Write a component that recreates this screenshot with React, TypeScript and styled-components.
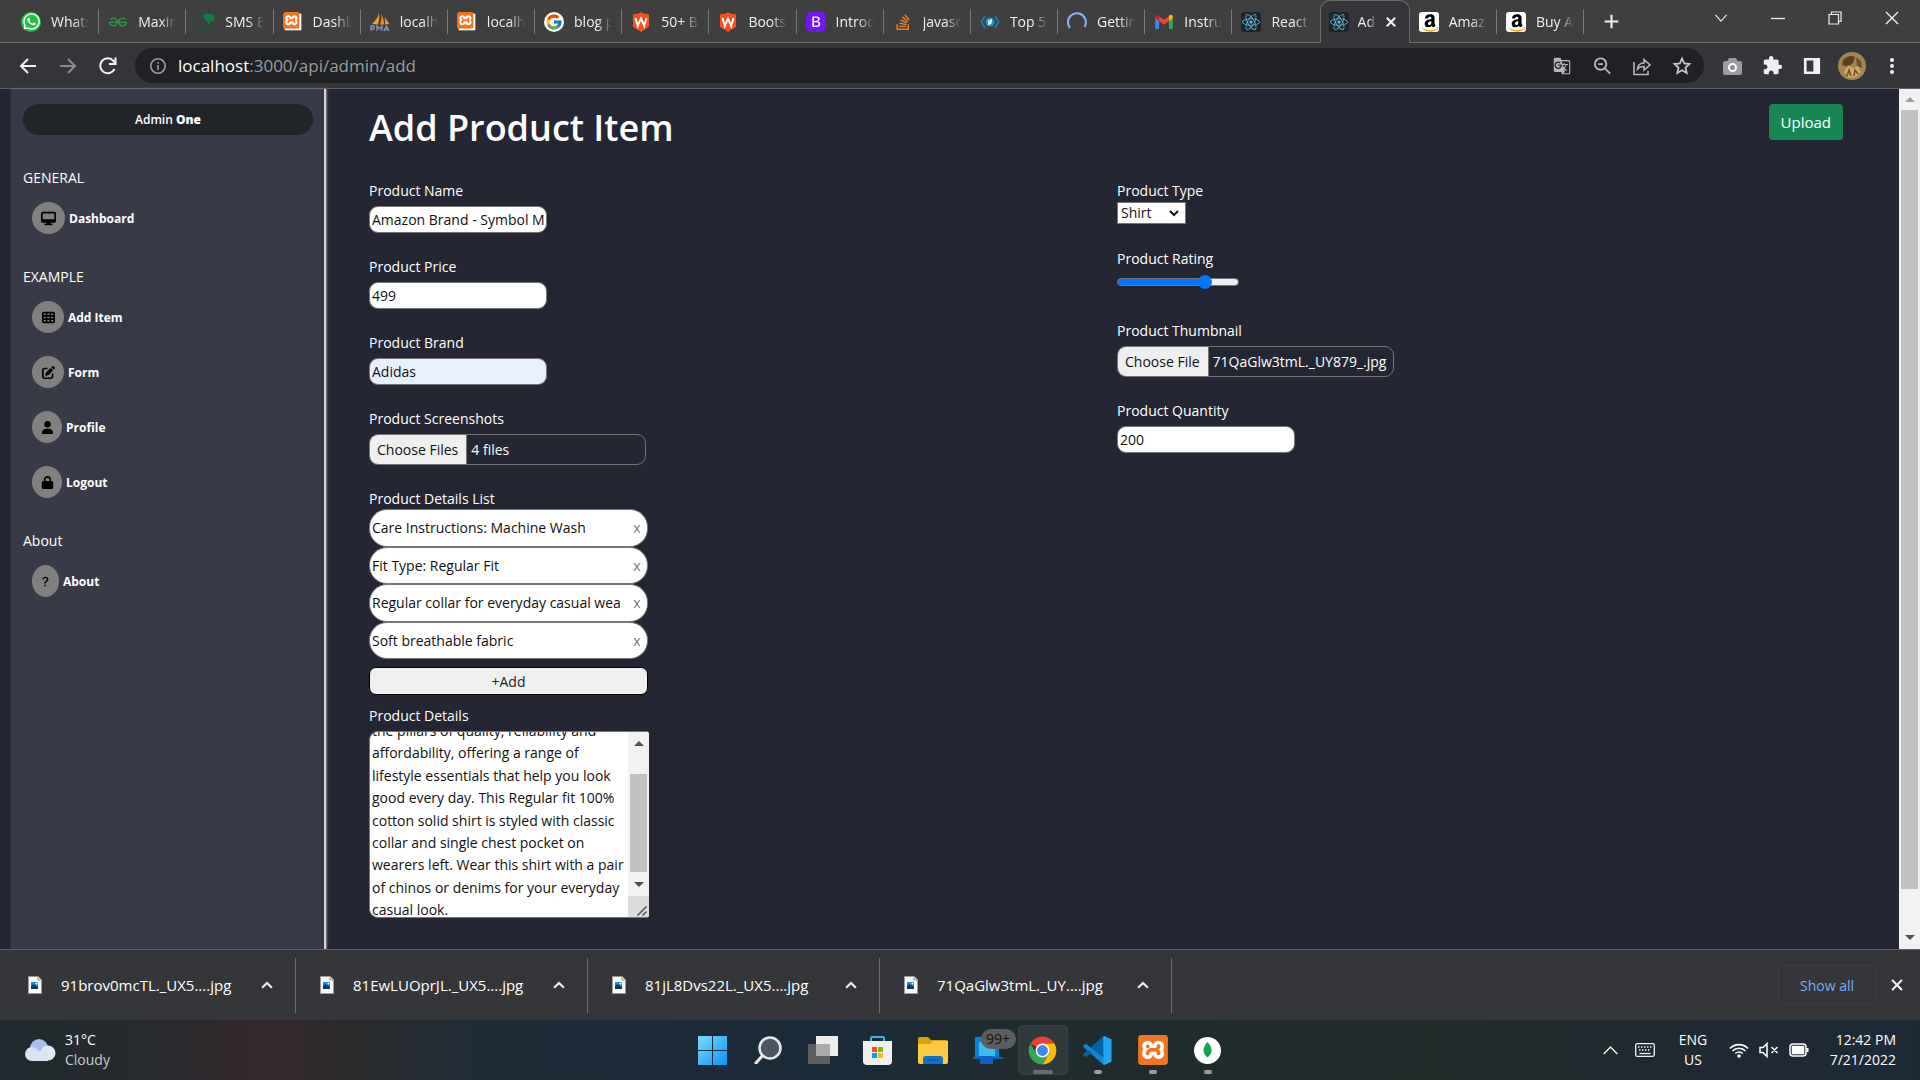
import React, { useEffect, useId, useRef } from "react";
import styled, { createGlobalStyle, css } from "styled-components";
import { FaAmazon, FaReact, FaWhatsapp, FaStackOverflow } from "react-icons/fa";
import { FaDesktop, FaTableCells, FaPenToSquare, FaUser, FaLock } from "react-icons/fa6";
import { BsQuestionLg, BsBootstrapFill } from "react-icons/bs";
import { SiXampp, SiGeeksforgeeks } from "react-icons/si";
import { FcGoogle } from "react-icons/fc";
import { MdExtension, MdGTranslate } from "react-icons/md";

const GlobalStyle = createGlobalStyle`
  *, *::before, *::after { box-sizing: border-box; }
  body {
    margin: 0;
    background: #252634;
    color: #fff;
    font-family: "Open Sans", "Noto Sans", sans-serif;
    font-size: 14px;
    line-height: 21px;
  }
  button, input, select, textarea { font: inherit; }
  button { border: 0; padding: 0; background: none; color: inherit; }
  svg { display: block; flex: none; }
`;

const Screen = styled.div`
  display: flex;
  flex-direction: column;
  height: 100vh;
  overflow: hidden;
`;

/* ---------- tab strip ---------- */

const TabStrip = styled.header`
  display: flex;
  flex: none;
  height: 43px;
  padding-left: 12px;
  background: #3f3f3f;
  box-shadow: inset 0 -1px #6b6c6e;
`;

const Tabs = styled.nav`
  display: flex;
  flex: 0 1 1572px;
  min-width: 0;
`;

const Tab = styled.a<{ $active?: boolean; $plain?: boolean }>`
  display: flex;
  flex: 1 1 0;
  align-items: center;
  gap: 10px;
  min-width: 0;
  padding: 0 10px 0 9px;
  color: #f1f1f1;
  text-decoration: none;
  background: linear-gradient(#77787a, #77787a) no-repeat right center / ${(p) => (p.$plain ? "0 0" : "1px 25px")};
  ${(p) =>
    p.$active &&
    css`
      gap: 9px;
      background: #35363a;
      border: 1px solid #6b6c6e;
      border-bottom: 0;
      border-radius: 10px 10px 0 0;
      padding: 0 12px 1px 8px;
    `}
`;

const TabTitle = styled.span`
  flex: 1;
  min-width: 0;
  overflow: hidden;
  white-space: nowrap;
  mask-image: linear-gradient(to right, #000 60%, transparent);
`;

const Favicon = styled.span<{ $bg?: string; $color?: string; $size?: number; $round?: boolean }>`
  display: grid;
  flex: none;
  place-items: center;
  width: 20px;
  height: 20px;
  overflow: hidden;
  border-radius: ${(p) => (p.$round ? 10 : 3)}px;
  background: ${(p) => p.$bg ?? "transparent"};
  color: ${(p) => p.$color ?? "#fff"};
  svg { width: ${(p) => p.$size ?? 20}px; height: ${(p) => p.$size ?? 20}px; }
`;

const IconButton = styled.button<{ $w?: number; $color?: string }>`
  display: grid;
  flex: none;
  place-items: center;
  width: ${(p) => p.$w ?? 40}px;
  height: 36px;
  color: ${(p) => p.$color ?? "#f1f1f1"};
`;

const NewTab = styled(IconButton)`
  margin: 3px auto 0 7px;
`;

/* ---------- address bar ---------- */

const Toolbar = styled.div`
  display: flex;
  flex: none;
  align-items: center;
  height: 46px;
  padding: 0 8px;
  background: #35363a;
  border-bottom: 1px solid #5f6063;
`;

const Omnibox = styled.div`
  display: flex;
  flex: 1;
  align-items: center;
  height: 35px;
  margin: 0 8px 0 7px;
  padding: 0 2px 0 14px;
  border-radius: 18px;
  background: #202124;
  color: #9a9da1;
`;

const Url = styled.div`
  flex: 1;
  margin-left: 11px;
  font-size: 17px;
  line-height: 24px;
  b { font-weight: 400; color: #fff; }
`;

/* ---------- page ---------- */

const Page = styled.div`
  display: flex;
  flex: 1;
  min-height: 0;
  padding-left: 11px;
  background: #252634;
`;

const Sidebar = styled.aside`
  flex: none;
  width: 315px;
  padding: 15px 11px 0 12px;
  border-right: 2px solid #d6d6da;
  background: #393a47;
  box-shadow: 1px 0 2px #8a8a93;
`;

const AdminBadge = styled.div`
  height: 31px;
  border-radius: 16px;
  background: #212529;
  font-size: 12px;
  font-weight: 600;
  line-height: 31px;
  text-align: center;
  b { font-weight: 800; }
`;

const NavTitle = styled.h2`
  margin: 32px 0 14px;
  font-size: 14px;
  font-weight: 400;
  line-height: 21px;
`;

const NavList = styled.ul`
  display: grid;
  gap: 23px;
  margin: 0;
  padding: 0 0 0 9px;
  list-style: none;
`;

const NavLink = styled.a<{ $disc: number }>`
  display: flex;
  align-items: center;
  gap: 4px;
  color: #fff;
  font-size: 12px;
  font-weight: 700;
  text-decoration: none;
  span {
    display: grid;
    place-items: center;
    width: ${(p) => p.$disc}px;
    height: 32px;
    border-radius: 50%;
    background: #808080;
    color: #000;
  }
`;

const Main = styled.main`
  flex: 1;
  min-width: 0;
  padding: 15px 56px 0 43px;
`;

const Heading = styled.div`
  display: flex;
  align-items: flex-start;
  justify-content: space-between;
  margin-bottom: 28px;
  h1 { margin: 0; font-size: 36px; font-weight: 600; line-height: 48px; }
`;

const Upload = styled.button`
  height: 36px;
  padding: 0 12px;
  border-radius: 4px;
  background: #198754;
  font-size: 15px;
`;

const Form = styled.form`
  display: grid;
  grid-template-columns: 1fr 1fr;
  gap: 22px;
`;

const Column = styled.div`
  display: flex;
  flex-direction: column;
  align-items: flex-start;
`;

const Field = styled.div<{ $gap?: number; $after?: number }>`
  display: flex;
  flex-direction: column;
  align-items: flex-start;
  gap: ${(p) => p.$gap ?? 5}px;
  margin-bottom: ${(p) => p.$after ?? 23}px;
`;

const TextInput = styled.input<{ $filled?: boolean }>`
  width: 178px;
  height: 27px;
  padding: 0 2px;
  border: 1px solid #767676;
  border-radius: 9px;
  background: ${(p) => (p.$filled ? "#e8f0fe" : "#fff")};
  color: #111;
`;

const FileBox = styled.input`
  width: 277px;
  height: 31px;
  border: 1px solid #767676;
  border-radius: 9px;
  color: #fff;
  line-height: 29px;
  &::file-selector-button {
    height: 29px;
    margin: 0 4px 0 0;
    padding: 0 8px 0 7px;
    border: 0;
    border-right: 1px solid #767676;
    background: #efefef;
    color: #111;
    font: inherit;
  }
`;

const SelectBox = styled.div`
  position: relative;
  svg { position: absolute; right: 7px; top: 8px; pointer-events: none; }
`;

const Select = styled.select`
  display: block;
  width: 69px;
  height: 22px;
  padding: 0 3px;
  border: 1px solid #767676;
  border-radius: 0;
  background: #fff;
  color: #111;
  line-height: 20px;
  appearance: none;
`;

const Range = styled.input`
  width: 122px;
  height: 16px;
  margin: 0;
  appearance: none;
  background: transparent;
  &::-webkit-slider-runnable-track {
    height: 8px;
    border: 1px solid #6f7480;
    border-radius: 4px;
    background: linear-gradient(to right, #0075ff 72%, #efefef 72%);
  }
  &::-webkit-slider-thumb {
    width: 14px;
    height: 14px;
    margin-top: -4px;
    border-radius: 50%;
    background: #0075ff;
    appearance: none;
  }
`;

const DetailList = styled.ul`
  display: grid;
  grid-template-rows: repeat(4, 1fr);
  width: 279px;
  height: 150px;
  margin: 0;
  padding: 0;
  list-style: none;
`;

const DetailRow = styled.li`
  display: flex;
  overflow: hidden;
  border: 1px solid #767676;
  border-radius: 18px;
  background: #fff;
  input {
    flex: 1;
    min-width: 0;
    padding: 0 0 0 2px;
    border: 0;
    background: none;
    color: #111;
  }
  button { width: 17px; margin-right: 1px; padding-right: 1px; color: #777; }
`;

const AddButton = styled.button`
  width: 279px;
  height: 28px;
  margin-top: 8px;
  border: 1px solid #000;
  border-radius: 7px;
  background: #efefef;
  color: #222;
`;

const AreaBox = styled.div`
  display: flex;
  width: 280px;
  height: 187px;
  overflow: hidden;
  border: 1px solid #767676;
  border-right: 0;
  border-radius: 9px 3px 3px 9px;
  background: #fff;
`;

const Area = styled.textarea`
  flex: 1;
  min-width: 0;
  padding: 2px 0 12px 2px;
  border: 0;
  outline: 0;
  overflow: hidden;
  resize: none;
  background: none;
  color: #111;
  line-height: 1.6;
  white-space: pre;
`;

const ScrollTrack = styled.div<{ $w: number }>`
  display: flex;
  flex: none;
  flex-direction: column;
  align-items: center;
  width: ${(p) => p.$w}px;
  background: #f1f1f1;
  color: #505050;
`;

const ScrollArrow = styled.span<{ $up?: boolean; $muted?: boolean; $h?: number }>`
  display: grid;
  flex: none;
  place-items: center;
  height: ${(p) => p.$h ?? 21}px;
  opacity: ${(p) => (p.$muted ? 0.5 : 1)};
  &::before {
    content: "";
    border: 5px solid transparent;
    border-${(p) => (p.$up ? "bottom" : "top")}-color: currentColor;
    border-${(p) => (p.$up ? "top" : "bottom")}-width: 0;
  }
`;

const ScrollRail = styled.div<{ $before: number; $thumb: number; $after: number }>`
  display: grid;
  flex: 1;
  align-self: stretch;
  margin: 0 2px;
  grid-template-rows: ${(p) => `${p.$before}fr ${p.$thumb}fr ${p.$after}fr`};
  &::before { content: ""; grid-row: 2; background: #c1c1c1; }
`;

const Grip = styled.span`
  display: grid;
  flex: none;
  place-items: end;
  width: 100%;
  height: 21px;
  padding: 0 2px 1px 0;
  background: #dcdcdc;
`;

/* ---------- downloads ---------- */

const DownloadBar = styled.section`
  display: flex;
  flex: none;
  align-items: center;
  height: 71px;
  padding: 0 8px 0 4px;
  border-top: 1px solid #5f6063;
  background: #35363a;
`;

const Download = styled.div`
  display: flex;
  flex: 0 1 292px;
  align-items: center;
  height: 55px;
  padding: 0 18px 0 24px;
  border-right: 1px solid #6b6c6e;
  font-size: 15px;
  white-space: nowrap;
  a { flex: 1; margin-left: 19px; color: #fff; text-decoration: none; }
`;

const ShowAll = styled.button`
  width: 98px;
  height: 40px;
  margin: 0 6px 0 auto;
  border: 1px solid #3f4044;
  border-radius: 5px;
  color: #7baaf7;
  font-weight: 500;
`;

/* ---------- taskbar ---------- */

const Taskbar = styled.footer`
  display: grid;
  flex: none;
  grid-template-columns: 1fr auto 1fr;
  align-items: center;
  height: 60px;
  padding: 0 24px;
  background: linear-gradient(
    to right,
    #202a2e 0%, #282a30 8%, #35282a 14%, #2b2b2c 18%, #1f2c38 25%,
    #1c2b39 44%, #202b2e 53%, #222c2b 75%, #202a2f 84%, #202936 92%, #1d2a36 100%
  );
`;

const Weather = styled.button`
  display: flex;
  align-items: center;
  gap: 9px;
  justify-self: start;
  line-height: 20px;
  text-align: left;
  span { display: grid; }
  small { font-size: 14px; color: #c8cacc; }
`;

const Apps = styled.div`
  display: flex;
  gap: 5px;
`;

const TaskButton = styled.button<{ $active?: boolean; $running?: boolean }>`
  position: relative;
  display: grid;
  place-items: center;
  width: 50px;
  height: 50px;
  border-radius: 5px;
  ${(p) => p.$active && css`background: #31393c; box-shadow: inset 0 0 0 1px #3a4245;`}
  &::after {
    content: "";
    position: absolute;
    bottom: 1px;
    width: ${(p) => (p.$active ? 20 : p.$running ? 8 : 0)}px;
    height: 4px;
    border-radius: 2px;
    background: ${(p) => (p.$active ? "#6a6c6d" : "#9c9fa0")};
  }
`;

const Count = styled.span`
  position: absolute;
  top: 4px;
  right: -3px;
  width: 35px;
  height: 20px;
  border-radius: 10px;
  background: #5d5d5d;
  color: #111;
  line-height: 20px;
`;

const Tray = styled.div`
  display: flex;
  align-items: center;
  justify-content: flex-end;
  line-height: 20px;
  text-align: center;
`;

const TrayGroup = styled.div`
  display: flex;
  align-items: center;
  gap: 10px;
  margin: 0 19px 0 16px;
`;

const Language = styled.div`
  width: 40px;
  margin-left: 3px;
`;

const Clock = styled.time`
  width: 67px;
  text-align: right;
  white-space: nowrap;
`;

/* ---------- drawings ---------- */

type StrokeProps = { d: string; size?: number; w?: number };
const Stroke = ({ d, size = 20, w = 2 }: StrokeProps) => (
  <svg width={size} height={size} viewBox="0 0 20 20" fill="none" stroke="currentColor" strokeWidth={w}>
    <path d={d} />
  </svg>
);

const XamppMark = ({ size = 20 }: { size?: number }) => (
  <svg width={size} height={size} viewBox="0 0 24 24">
    <rect x="2" y="2" width="20" height="20" fill="#fff" />
    <SiXampp size={24} color="#f37522" />
  </svg>
);

const Shield = () => (
  <svg viewBox="0 0 20 20">
    <path d="M10 0l2 1.6 6 .6v12.6L10 20l-8-5.200V2.200l6-.6z" fill="#f4511e" />
    <path d="M4.500 6l2.300 8L10 6.500l3.200 7.500 2.300-8" fill="none" stroke="#fff" strokeWidth="1.900" />
  </svg>
);

const AmazonMark = () => {
  const id = useId();
  return (
    <svg viewBox="0 0 20 20">
      <linearGradient id={id} x2="0" y2="1">
        <stop offset=".74" stopColor="#000" />
        <stop offset=".74" stopColor="#ff9900" />
      </linearGradient>
      <FaAmazon x="1" y="1" size={18} fill={`url(#${id})`} />
    </svg>
  );
};

const GmailMark = () => (
  <svg viewBox="0 0 24 24">
    <path d="M1.500 6.500v12.800c0 .9.700 1.200 1.200 1.200h3.400V10z" fill="#4285f4" />
    <path d="M22.500 6.500v12.800c0 .9-.7 1.200-1.200 1.200h-3.400V10z" fill="#34a853" />
    <path d="M17.900 5v5.800l4.600-3.500V5.500c0-2-2.200-3-3.700-1.800z" fill="#fbbc04" />
    <path d="M6.100 10.800V5l5.900 4.400L17.900 5v5.800L12 15.200z" fill="#ea4335" />
    <path d="M1.500 5.500v1.800l4.600 3.500V5l-.9-1.300C3.700 2.500 1.500 3.500 1.500 5.500z" fill="#c5221f" />
  </svg>
);

const SailMark = () => (
  <svg viewBox="0 0 20 20">
    <path d="M9 1C8 6 5 9 2 12l6 .5C9 9 9.500 5 9 1z" fill="#f7a11a" />
    <path d="M11 2c1 3 .5 7-1 10.500h4C14 9 13 5 11 2z" fill="#f58b1e" />
    <path d="M14 5c1.500 2 1.500 5 .9 7.500l4.100-.5C18 9 16 7 14 5z" fill="#f7a11a" />
    <path d="M1 19v-5h3v3H1M7 19v-5l2.500 3 2.500-3v5M14 19l2.500-5 2.500 5M15 17.500h3" fill="none" stroke="#8a8fb5" strokeWidth="1.400" />
  </svg>
);

const SmsMark = () => (
  <svg viewBox="0 0 20 20">
    <path d="M9 2h6a4 4 0 0 1 1 8l-3 3v-3l-4-3z" fill="#127a44" />
    <path d="M2 4l3 4M3 8l4-3M5 12l3-4" stroke="#24455c" fill="none" />
    <path d="M1 17h18" stroke="#175f3c" strokeWidth="1.500" strokeDasharray="3 1" />
  </svg>
);

const CodeMark = () => (
  <svg viewBox="0 0 20 20" fill="none" stroke="#1b7ba8" strokeWidth="2">
    <path d="M5 4L1.500 10 5 16M15 4l3.500 6L15 16" />
    <circle cx="10" cy="10" r="4.500" fill="#1c96d1" stroke="none" />
    <path d="M9 8v5M11.500 7l-1 5" stroke="#fff" strokeWidth="1.500" />
  </svg>
);

const FileImage = () => (
  <svg width="14" height="18" viewBox="0 0 14 18">
    <path d="M.5.5h9.500l3.500 3.500v13.500H.5z" fill="#fafafa" stroke="#9a9a9a" />
    <path d="M10 .5V4h3.500" fill="#ddd" stroke="#9a9a9a" />
    <path d="M3 6h7v7H3z" fill="#1f8ad6" />
    <path d="M3 10l2.500-2 4.500 3v2H3z" fill="#12356f" />
    <circle cx="8.500" cy="7.500" r="1" fill="#fff" />
  </svg>
);

const ChromeMark = () => (
  <svg width="29" height="29" viewBox="0 0 48 48">
    <path d="M24 24L4.100 12.500A23 23 0 0 1 43.900 12.500H24z" fill="#ea4335" />
    <path d="M43.900 12.500A23 23 0 0 1 24 47l10-17.300L24 12.500z" fill="#fbbc04" />
    <path d="M24 47A23 23 0 0 1 4.100 12.500l10 17.300L34 29.800z" fill="#34a853" />
    <circle cx="24" cy="24" r="11.500" fill="#fff" />
    <circle cx="24" cy="24" r="9" fill="#4285f4" />
  </svg>
);

const CodeEditorMark = () => (
  <svg width="31" height="31" viewBox="0 0 32 32">
    <path d="M23 1L9.500 13.500 4 9.300 1.500 10.500v2.200L21 30l2 1z" fill="#0a7fcf" />
    <path d="M23 31L9.500 18.500 4 22.700 1.500 21.500v-2.200L21 2l2-1z" fill="#0065a9" />
    <path d="M1.500 10.500L4 9.300 23 24v7z" fill="#1686d0" />
    <path d="M23 1l7.500 3.500v23L23 31l-1-1V2z" fill="#22a5f1" />
  </svg>
);

const tabs: { title: string; icon: React.ReactNode; active?: boolean; plain?: boolean }[] = [
  { title: "Whats", icon: <Favicon $bg="#25c04b" $color="#fff" $size={19} $round><FaWhatsapp /></Favicon> },
  { title: "Maxim", icon: <Favicon $color="#2f8d46" $size={18}><SiGeeksforgeeks /></Favicon> },
  { title: "SMS B", icon: <Favicon><SmsMark /></Favicon> },
  { title: "Dashb", icon: <Favicon><XamppMark /></Favicon> },
  { title: "localh", icon: <Favicon><SailMark /></Favicon> },
  { title: "localh", icon: <Favicon><XamppMark /></Favicon> },
  { title: "blog p", icon: <Favicon $bg="#fff" $size={18} $round><FcGoogle /></Favicon> },
  { title: "50+ B", icon: <Favicon><Shield /></Favicon> },
  { title: "Boots", icon: <Favicon><Shield /></Favicon> },
  { title: "Introd", icon: <Favicon $bg="linear-gradient(#fff, #fff) center / 14px 14px no-repeat" $color="#7413f5"><BsBootstrapFill /></Favicon> },
  { title: "javasc", icon: <Favicon $color="#f2802a" $size={18}><FaStackOverflow /></Favicon> },
  { title: "Top 5", icon: <Favicon><CodeMark /></Favicon> },
  { title: "Gettin", icon: <Favicon $color="#8ab4f8"><Stroke d="M3 16A9 9 0 1 1 17.500 15" w={2} /></Favicon> },
  { title: "Instru", icon: <Favicon><GmailMark /></Favicon> },
  { title: "React", icon: <Favicon $bg="#20232a" $color="#5bc4dc" $size={18}><FaReact /></Favicon>, plain: true },
  { title: "Ad", icon: <Favicon $bg="#20232a" $color="#5bc4dc" $size={18}><FaReact /></Favicon>, active: true },
  { title: "Amaz", icon: <Favicon $bg="#fff"><AmazonMark /></Favicon> },
  { title: "Buy A", icon: <Favicon $bg="#fff"><AmazonMark /></Favicon> },
];

const sections = [
  { title: "GENERAL", items: [{ name: "Dashboard", disc: 33, icon: <FaDesktop size={15} /> }] },
  {
    title: "EXAMPLE",
    items: [
      { name: "Add Item", disc: 32, icon: <FaTableCells size={13} /> },
      { name: "Form", disc: 32, icon: <FaPenToSquare size={13} /> },
      { name: "Profile", disc: 30, icon: <FaUser size={13} /> },
      { name: "Logout", disc: 30, icon: <FaLock size={13} /> },
    ],
  },
  { title: "About", items: [{ name: "About", disc: 27, icon: <BsQuestionLg size={13} /> }] },
];

const details = [
  "Care Instructions: Machine Wash",
  "Fit Type: Regular Fit",
  "Regular collar for everyday casual wea",
  "Soft breathable fabric",
];

const downloads = ["91brov0mcTL._UX5....jpg", "81EwLUOprJL._UX5....jpg", "81jL8Dvs22L._UX5....jpg", "71QaGlw3tmL._UY....jpg"];

const description = `the pillars of quality, reliability and
affordability, offering a range of
lifestyle essentials that help you look
good every day. This Regular fit 100%
cotton solid shirt is styled with classic
collar and single chest pocket on
wearers left. Wear this shirt with a pair
of chinos or denims for your everyday
casual look.`;

function TextField(props: { id: string; label: string; value: string; filled?: boolean }) {
  return (
    <Field>
      <label htmlFor={props.id}>{props.label}</label>
      <TextInput id={props.id} defaultValue={props.value} $filled={props.filled} />
    </Field>
  );
}

function FileField(props: { id: string; label: string; files: string[]; multiple?: boolean }) {
  const ref = useRef<HTMLInputElement>(null);
  useEffect(() => {
    const transfer = new DataTransfer();
    props.files.forEach((name) => transfer.items.add(new File([""], name, { type: "image/jpeg" })));
    if (ref.current) ref.current.files = transfer.files;
  }, []);
  return (
    <Field>
      <label htmlFor={props.id}>{props.label}</label>
      <FileBox ref={ref} id={props.id} type="file" multiple={props.multiple} />
    </Field>
  );
}

function Description() {
  const ref = useRef<HTMLTextAreaElement>(null);
  useEffect(() => {
    if (ref.current) ref.current.scrollTop = 14;
  }, []);
  return (
    <Field $after={0}>
      <label htmlFor="details">Product Details</label>
      <AreaBox>
        <Area id="details" ref={ref} defaultValue={description} />
        <ScrollTrack $w={21}>
          <ScrollArrow $up $h={23} />
          <ScrollRail $before={19} $thumb={99} $after={1} />
          <ScrollArrow $h={23} />
          <Grip>
            <Stroke d="M1 19L19 1M11 19l8-8" size={10} w={3} />
          </Grip>
        </ScrollTrack>
      </AreaBox>
    </Field>
  );
}

export default function App() {
  return (
    <Screen>
      <GlobalStyle />
      <TabStrip>
        <Tabs>
          {tabs.map((t, i) => (
            <Tab key={i} href="#" $active={t.active} $plain={t.plain}>
              {t.icon}
              <TabTitle>{t.title}</TabTitle>
              {t.active && <Stroke d="M3 3l14 14M17 3L3 17" size={12} w={3.500} />}
            </Tab>
          ))}
        </Tabs>
        <NewTab aria-label="New tab"><Stroke d="M10 2v16M2 10h16" size={17} w={2.500} /></NewTab>
        <IconButton $w={57} aria-label="Search tabs"><Stroke d="M3 6l7 8 7-8" size={16} w={1.300} /></IconButton>
        <IconButton $w={57} aria-label="Minimize"><Stroke d="M3 10.500h14" w={1.300} /></IconButton>
        <IconButton $w={57} aria-label="Restore"><Stroke d="M4 6.500h9.500V16H4zM6.500 6.500V4H16v9.500h-2.500" w={1.200} /></IconButton>
        <IconButton $w={57} aria-label="Close"><Stroke d="M4 4l12 12M16 4L4 16" w={1.300} /></IconButton>
      </TabStrip>

      <Toolbar>
        <IconButton aria-label="Back"><Stroke d="M18 10H3M10 3l-7 7 7 7" w={2} /></IconButton>
        <IconButton aria-label="Forward" $color="#8a8b8e"><Stroke d="M2 10h15M10 3l7 7-7 7" w={2} /></IconButton>
        <IconButton aria-label="Reload"><Stroke d="M16.500 13A7.500 7.500 0 1 1 15.500 5L17 7M17.500 1.500V8H11" w={2} /></IconButton>
        <Omnibox>
          <Stroke d="M10 2a8 8 0 1 0 0 16 8 8 0 0 0 0-16M10 9v5.500M10 5.500v2" size={18} w={1.800} />
          <Url><b>localhost</b>:3000/api/admin/add</Url>
          <IconButton aria-label="Translate" $color="#b5b7ba"><MdGTranslate size={18} /></IconButton>
          <IconButton aria-label="Zoom" $color="#b5b7ba"><Stroke d="M8 2.500a6 6 0 1 0 0 12 6 6 0 0 0 0-12M12.500 13l5.500 5.500M5.500 8.500h5" w={2} size={19} /></IconButton>
          <IconButton aria-label="Share" $color="#b5b7ba"><Stroke d="M2 6v12.500h14V15M5.500 13c.5-4 3-6 6.500-6V3.500l6 5.500-6 5v-3.500c-3 0-5 .7-6.500 2.500z" w={1.600} /></IconButton>
          <IconButton aria-label="Bookmark" $color="#c5c7ca"><Stroke d="M10 2.500l2.200 5 5.300.5-4 3.600 1.200 5.400-4.700-2.800L5.300 17l1.200-5.400-4-3.600 5.300-.5z" w={1.800} /></IconButton>
        </Omnibox>
        <IconButton aria-label="Screenshot" $color="#9b9da0">
          <svg width="19" height="18" viewBox="0 0 19 18">
            <path d="M6 1h7l1.500 3H17a2 2 0 0 1 2 2v10a2 2 0 0 1-2 2H2a2 2 0 0 1-2-2V6a2 2 0 0 1 2-2h2.500z" fill="currentColor" />
            <circle cx="9.500" cy="10.500" r="3.500" fill="#8a8c8f" stroke="#fff" strokeWidth="2" />
          </svg>
        </IconButton>
        <IconButton aria-label="Extensions"><MdExtension size={21} /></IconButton>
        <IconButton aria-label="Side panel"><Stroke d="M2.500 2.500h15v15h-15zM15 2v16M13 2v16" w={3} size={18} /></IconButton>
        <IconButton aria-label="Profile">
          <svg width="28" height="28" viewBox="0 0 28 28">
            <circle cx="14" cy="14" r="14" fill="#a5854f" />
            <path d="M5 8C9 4 13 3 17 5l-2 6-5 4-6-2z" fill="#5a4020" />
            <path d="M18 5l5 4 1 7-5-2z" fill="#6b5028" />
            <path d="M6 20l4-7 5 3 5-2 3 6-5 5-7 1z" fill="#cfa868" />
            <path d="M9 24l2-6 2 6M16 24l1-6 3 4" stroke="#6d4f29" fill="none" strokeWidth="1.500" />
          </svg>
        </IconButton>
        <IconButton aria-label="Menu">
          <svg width="4" height="16" viewBox="0 0 4 16" fill="currentColor">
            <circle cx="2" cy="2" r="2" /><circle cx="2" cy="8" r="2" /><circle cx="2" cy="14" r="2" />
          </svg>
        </IconButton>
      </Toolbar>

      <Page>
        <Sidebar>
          <AdminBadge>Admin <b>One</b></AdminBadge>
          {sections.map((s) => (
            <nav key={s.title}>
              <NavTitle>{s.title}</NavTitle>
              <NavList>
                {s.items.map((item) => (
                  <li key={item.name}>
                    <NavLink href="#" $disc={item.disc}><span>{item.icon}</span>{item.name}</NavLink>
                  </li>
                ))}
              </NavList>
            </nav>
          ))}
        </Sidebar>

        <Main>
          <Heading>
            <h1>Add Product Item</h1>
            <Upload type="submit" form="product">Upload</Upload>
          </Heading>
          <Form id="product">
            <Column>
              <TextField id="name" label="Product Name" value="Amazon Brand - Symbol Men" />
              <TextField id="price" label="Product Price" value="499" />
              <TextField id="brand" label="Product Brand" value="Adidas" filled />
              <FileField id="shots" label="Product Screenshots" files={["1.jpg", "2.jpg", "3.jpg", "4.jpg"]} multiple />
              <Field $gap={0} $after={10}>
                <label htmlFor="detail-0">Product Details List</label>
                <DetailList>
                  {details.map((d, i) => (
                    <DetailRow key={d}>
                      <input id={`detail-${i}`} aria-label={`Detail ${i + 1}`} defaultValue={d} />
                      <button type="button">x</button>
                    </DetailRow>
                  ))}
                </DetailList>
                <AddButton type="button">+Add</AddButton>
              </Field>
              <Description />
            </Column>
            <Column>
              <Field $gap={1} $after={24}>
                <label htmlFor="type">Product Type</label>
                <SelectBox>
                  <Select id="type"><option>Shirt</option></Select>
                  <svg width="10" height="7" viewBox="0 0 10 7" fill="none" stroke="#111" strokeWidth="2">
                    <path d="M1 1l4 4 4-4" />
                  </svg>
                </SelectBox>
              </Field>
              <Field $after={30}>
                <label htmlFor="rating">Product Rating</label>
                <Range id="rating" type="range" min={0} max={100} defaultValue={75} />
              </Field>
              <FileField id="thumb" label="Product Thumbnail" files={["71QaGlw3tmL._UY879_.jpg"]} />
              <TextField id="quantity" label="Product Quantity" value="200" />
            </Column>
          </Form>
        </Main>

        <ScrollTrack $w={21}>
          <ScrollArrow $up $muted />
          <ScrollRail $before={0} $thumb={779} $after={36} />
          <ScrollArrow $h={24} />
        </ScrollTrack>
      </Page>

      <DownloadBar>
        {downloads.map((name) => (
          <Download key={name}>
            <FileImage />
            <a href="#">{name}</a>
            <IconButton $w={20} aria-label="Options"><Stroke d="M3 14l7-7 7 7" size={14} w={3} /></IconButton>
          </Download>
        ))}
        <ShowAll>Show all</ShowAll>
        <IconButton $w={30} aria-label="Close downloads"><Stroke d="M3 3l14 14M17 3L3 17" size={14} w={3} /></IconButton>
      </DownloadBar>

      <Taskbar>
        <Weather>
          <svg width="32" height="22" viewBox="0 0 32 22">
            <circle cx="15" cy="9" r="9" fill="#a9c1ea" />
            <circle cx="8" cy="15" r="7" fill="#d6e2f6" />
            <circle cx="24" cy="14" r="7.500" fill="#dfe8f6" />
            <path d="M8 12h16v10H8z" fill="#d9e4f5" />
          </svg>
          <span>31°C<small>Cloudy</small></span>
        </Weather>
        <Apps>
          <TaskButton aria-label="Start">
            <svg width="29" height="29" viewBox="0 0 29 29">
              <linearGradient id="win" x2="1" y2="1"><stop stopColor="#7bdcfb" /><stop offset="1" stopColor="#0a93f5" /></linearGradient>
              <path d="M0 0h14v14H0zM15 0h14v14H15zM0 15h14v14H0zM15 15h14v14H15z" fill="url(#win)" />
            </svg>
          </TaskButton>
          <TaskButton aria-label="Search">
            <svg width="28" height="28" viewBox="0 0 28 28" stroke="#e6e8ea" strokeWidth="2.500">
              <path d="M9 19l-7 8" strokeWidth="3" strokeLinecap="round" />
              <circle cx="16" cy="12" r="10.500" fill="#4b5660" />
            </svg>
          </TaskButton>
          <TaskButton aria-label="Task view">
            <svg width="30" height="28" viewBox="0 0 30 28">
              <path d="M0 8h22v20H0z" fill="#5d5f61" />
              <path d="M8 0h22v20H8z" fill="#ececec" />
              <path d="M8 8h14v12H8z" fill="#a9aaab" />
            </svg>
          </TaskButton>
          <TaskButton aria-label="Store">
            <svg width="29" height="29" viewBox="0 0 29 29">
              <path d="M8 6V2q0-1 1-1h11q1 0 1 1v4" fill="none" stroke="#30b8e8" strokeWidth="2" />
              <path d="M0 5h29v20q0 4-4 4H4q-4 0-4-4z" fill="#f0f0f0" />
              <path d="M9 11h5v5H9z" fill="#f25022" /><path d="M15 11h5v5h-5z" fill="#7fba00" />
              <path d="M9 17h5v5H9z" fill="#00a4ef" /><path d="M15 17h5v5h-5z" fill="#ffb900" />
            </svg>
          </TaskButton>
          <TaskButton aria-label="File Explorer">
            <svg width="30" height="27" viewBox="0 0 30 27">
              <path d="M0 2q0-2 2-2h8l3 3h15q2 0 2 2v8H0z" fill="#dfa00c" />
              <path d="M0 7h12l3-3h15v21q0 2-2 2H2q-2 0-2-2z" fill="#fccb42" />
              <path d="M5 27v-5q0-3 3-3h14q3 0 3 3v5z" fill="#0f72c4" />
              <path d="M9 23h12" stroke="#0a4a86" />
            </svg>
          </TaskButton>
          <TaskButton aria-label="Chat">
            <svg width="30" height="27" viewBox="0 0 30 27">
              <path d="M2 0h24v20H2z" fill="#0f7fd6" />
              <path d="M6 5h16v14H6z" fill="#38bdf0" />
              <path d="M0 20h30v2H0z" fill="#0c62b5" />
              <path d="M7 19h13v8H7z" fill="#0b62bd" />
            </svg>
            <Count>99+</Count>
          </TaskButton>
          <TaskButton aria-label="Chrome" $active><ChromeMark /></TaskButton>
          <TaskButton aria-label="Code" $running><CodeEditorMark /></TaskButton>
          <TaskButton aria-label="XAMPP" $running><XamppMark size={30} /></TaskButton>
          <TaskButton aria-label="MongoDB Compass" $running>
            <svg width="27" height="27" viewBox="0 0 27 27">
              <circle cx="13.500" cy="13.500" r="13.500" fill="#fff" />
              <path d="M13.500 5q8 8.500 0 15.500-8-7 0-15.500z" fill="#12a350" />
            </svg>
          </TaskButton>
        </Apps>
        <Tray>
          <IconButton $w={20} aria-label="Hidden icons"><Stroke d="M2 14l8-8 8 8" size={17} w={1.700} /></IconButton>
          <IconButton $w={50} aria-label="Touch keyboard">
            <svg width="20" height="14" viewBox="0 0 20 14" fill="none" stroke="currentColor" strokeWidth="1.300">
              <rect x=".7" y=".7" width="18.600" height="12.600" rx="1.500" />
              <path d="M3 4h14M4 7h12" strokeDasharray="1.500 1.500" />
              <path d="M4.500 10.500h11" />
            </svg>
          </IconButton>
          <Language>ENG<br />US</Language>
          <TrayGroup>
            <svg width="20" height="16" viewBox="0 0 20 16" fill="none" stroke="currentColor" strokeWidth="1.600">
              <path d="M1 6.500a12.500 12.500 0 0 1 18 0M3.500 9a9 9 0 0 1 13 0M6.300 11.500a5.200 5.200 0 0 1 7.400 0" />
              <circle cx="10" cy="14" r="1" fill="currentColor" />
            </svg>
            <svg width="20" height="16" viewBox="0 0 20 16" fill="none" stroke="currentColor" strokeWidth="1.500">
              <path d="M1 5.500h3l4-4v13l-4-4H1zM12.500 5l6 6M18.500 5l-6 6" />
            </svg>
            <svg width="21" height="14" viewBox="0 0 21 14" fill="none" stroke="currentColor" strokeWidth="1.500">
              <rect x="1" y="1" width="16" height="12" rx="3" />
              <path d="M3.500 3.500h11v7h-11z" fill="currentColor" />
              <path d="M18.500 5v4" strokeWidth="2" />
            </svg>
          </TrayGroup>
          <Clock>12:42 PM<br />7/21/2022</Clock>
        </Tray>
      </Taskbar>
    </Screen>
  );
}
